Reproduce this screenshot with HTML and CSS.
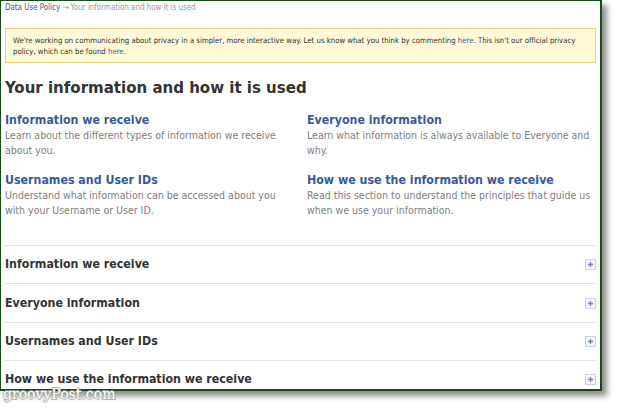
FILE: index.html
```html
<!DOCTYPE html>
<html>
<head>
<meta charset="utf-8">
<link rel="stylesheet" href="styles.css">
</head>
<body>
<div class="shot">
  <div class="frame">
    <div class="crumbs"><a class="link">Data Use Policy</a> <span class="arrow">→</span> Your information and how it is used</div>
    <div class="notice"><span>We're working on communicating about privacy in a simpler, more interactive way. Let us know what you think by commenting</span> <a class="link">here</a><span>. This isn't our official privacy</span> <span>policy, which can be found</span> <a class="link">here</a><span>.</span></div>
    <h1 class="title">Your information and how it is used</h1>
    <div class="grid">
      <div class="item">
        <a class="item-title">Information we receive</a>
        <p class="item-desc left">Learn about the different types of information we receive about you.</p>
      </div>
      <div class="item">
        <a class="item-title">Everyone information</a>
        <p class="item-desc">Learn what information is always available to Everyone and why.</p>
      </div>
      <div class="item">
        <a class="item-title">Usernames and User IDs</a>
        <p class="item-desc left">Understand what information can be accessed about you with your Username or User ID.</p>
      </div>
      <div class="item">
        <a class="item-title">How we use the information we receive</a>
        <p class="item-desc">Read this section to understand the principles that guide us when we use your information.</p>
      </div>
    </div>
    <div class="accordion">
      <div class="row"><span class="row-title">Information we receive</span><svg class="plus" width="11" height="11" viewBox="0 0 11 11"><rect x="0.5" y="0.5" width="10" height="10" fill="#f3f5f9" stroke="#cbd3e2"/><path d="M5.5 3v5M3 5.5h5" stroke="#6d84b4" stroke-width="1.3"/></svg></div>
      <div class="row"><span class="row-title">Everyone information</span><svg class="plus" width="11" height="11" viewBox="0 0 11 11"><rect x="0.5" y="0.5" width="10" height="10" fill="#f3f5f9" stroke="#cbd3e2"/><path d="M5.5 3v5M3 5.5h5" stroke="#6d84b4" stroke-width="1.3"/></svg></div>
      <div class="row"><span class="row-title">Usernames and User IDs</span><svg class="plus" width="11" height="11" viewBox="0 0 11 11"><rect x="0.5" y="0.5" width="10" height="10" fill="#f3f5f9" stroke="#cbd3e2"/><path d="M5.5 3v5M3 5.5h5" stroke="#6d84b4" stroke-width="1.3"/></svg></div>
      <div class="row"><span class="row-title">How we use the information we receive</span><svg class="plus" width="11" height="11" viewBox="0 0 11 11"><rect x="0.5" y="0.5" width="10" height="10" fill="#f3f5f9" stroke="#cbd3e2"/><path d="M5.5 3v5M3 5.5h5" stroke="#6d84b4" stroke-width="1.3"/></svg></div>
    </div>
  </div>
  <div class="watermark">groovyPost.com</div>
</div>
</body>
</html>
```
FILE: styles.css
```css
* { box-sizing: border-box; }
html, body { margin: 0; padding: 0; background: #fff; }
body { font-family: "DejaVu Sans Condensed", "DejaVu Sans", sans-serif; color: #333; }
.shot { position: relative; width: 620px; height: 409px; overflow: hidden; background: #fff; }
.frame {
  width: 602px; height: 391px;
  border-style: solid; border-color: #174a17;
  border-width: 1px 2px 2px 1px;
  box-shadow: 5px 5px 6px rgba(0,0,0,0.45);
  background: #fff;
  overflow: hidden;
  padding: 0 4px 0 4px;
}
.link { color: #3b5998; text-decoration: none; }
.crumbs { font-size: 8px; line-height: 12px; color: #999; padding-top: 1px; letter-spacing: -0.05px; }
.notice {
  margin-top: 14px;
  background: #fff9d7;
  border: 1px solid #e6d27e;
  padding: 6px 7px 5px;
  font-size: 7.72px; line-height: 11px; color: #333;
}
.title { margin: 14px 0 15px; font-size: 16.7px; line-height: 20px; font-weight: bold; color: #333; }
.grid { display: grid; grid-template-columns: 302px 1fr; row-gap: 14px; }
.item-title { display: block; font-size: 12.3px; line-height: 16px; font-weight: bold; color: #3b5998; }
.item-desc { margin: 0; font-size: 10.5px; line-height: 15px; color: #808080; }
.item-desc.left { width: 288px; }
.accordion { margin-top: 27px; }
.row {
  display: flex; justify-content: space-between; align-items: center;
  border-top: 1px solid #e2e2e2;
  height: 38.4px;
}
.row-title { font-size: 12.3px; font-weight: bold; color: #333; padding-bottom: 1px; }
.plus { display: block; }
.watermark {
  position: absolute; left: 3px; top: 385px;
  font-family: "DejaVu Serif", serif; font-size: 14px; line-height: 19px;
  color: #fff; -webkit-text-stroke: 1.3px #a8a8a8;
  paint-order: stroke fill;
}
```
